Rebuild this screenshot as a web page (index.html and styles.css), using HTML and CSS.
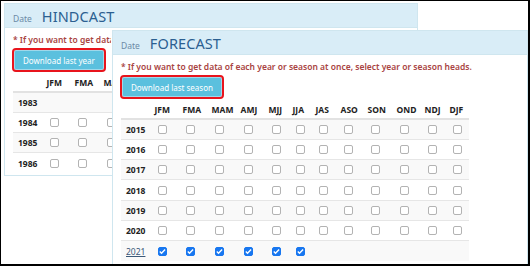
FILE: index.html
```html
<!DOCTYPE html>
<html>
<head>
	<meta http-equiv="Content-Type" content="text/html;charset=UTF-8">
	<title>Date</title>
	<link rel="stylesheet" href="styles.css">
</head>
<body>
	<div class="frame">
		<div class="panel hindcast">
			<div class="panel-heading">
				<span class="date-label">Date</span>
				<span class="panel-title">HINDCAST</span>
			</div>
			<div class="panel-body">
				<p class="notice">* If you want to get data of each year or season at once, select year or season heads.</p>
				<button class="btn-info">Download last year</button>
				<table class="season-table">
					<colgroup>
						<col class="c-year"><col class="c-jfm"><col class="c-fma"><col class="c-mam">
					</colgroup>
					<thead>
						<tr><th></th><th>JFM</th><th>FMA</th><th>MAM</th></tr>
					</thead>
					<tbody>
						<tr><td class="year">1983</td><td></td><td></td><td></td></tr>
						<tr><td class="year">1984</td><td><input type="checkbox"></td><td><input type="checkbox"></td><td><input type="checkbox"></td></tr>
						<tr><td class="year">1985</td><td><input type="checkbox"></td><td><input type="checkbox"></td><td><input type="checkbox"></td></tr>
						<tr><td class="year">1986</td><td><input type="checkbox"></td><td><input type="checkbox"></td><td><input type="checkbox"></td></tr>
					</tbody>
				</table>
			</div>
		</div>

		<div class="panel forecast">
			<div class="panel-heading">
				<span class="date-label">Date</span>
				<span class="panel-title">FORECAST</span>
			</div>
			<div class="panel-body">
				<p class="notice">* If you want to get data of each year or season at once, select year or season heads.</p>
				<button class="btn-info">Download last season</button>
				<table class="season-table full">
					<colgroup>
						<col class="c-year"><col class="c-jfm"><col class="c-fma"><col class="c-mam"><col class="c-amj"><col class="c-mjj"><col class="c-jja">
						<col class="c-jas"><col class="c-aso"><col class="c-son"><col class="c-ond"><col class="c-ndj"><col class="c-djf">
					</colgroup>
					<thead>
						<tr><th></th><th>JFM</th><th>FMA</th><th>MAM</th><th>AMJ</th><th>MJJ</th><th>JJA</th><th>JAS</th><th>ASO</th><th>SON</th><th>OND</th><th>NDJ</th><th>DJF</th></tr>
					</thead>
					<tbody>
						<tr><td class="year">2015</td><td><input type="checkbox"></td><td><input type="checkbox"></td><td><input type="checkbox"></td><td><input type="checkbox"></td><td><input type="checkbox"></td><td><input type="checkbox"></td><td><input type="checkbox"></td><td><input type="checkbox"></td><td><input type="checkbox"></td><td><input type="checkbox"></td><td><input type="checkbox"></td><td><input type="checkbox"></td></tr>
						<tr><td class="year">2016</td><td><input type="checkbox"></td><td><input type="checkbox"></td><td><input type="checkbox"></td><td><input type="checkbox"></td><td><input type="checkbox"></td><td><input type="checkbox"></td><td><input type="checkbox"></td><td><input type="checkbox"></td><td><input type="checkbox"></td><td><input type="checkbox"></td><td><input type="checkbox"></td><td><input type="checkbox"></td></tr>
						<tr><td class="year">2017</td><td><input type="checkbox"></td><td><input type="checkbox"></td><td><input type="checkbox"></td><td><input type="checkbox"></td><td><input type="checkbox"></td><td><input type="checkbox"></td><td><input type="checkbox"></td><td><input type="checkbox"></td><td><input type="checkbox"></td><td><input type="checkbox"></td><td><input type="checkbox"></td><td><input type="checkbox"></td></tr>
						<tr><td class="year">2018</td><td><input type="checkbox"></td><td><input type="checkbox"></td><td><input type="checkbox"></td><td><input type="checkbox"></td><td><input type="checkbox"></td><td><input type="checkbox"></td><td><input type="checkbox"></td><td><input type="checkbox"></td><td><input type="checkbox"></td><td><input type="checkbox"></td><td><input type="checkbox"></td><td><input type="checkbox"></td></tr>
						<tr><td class="year">2019</td><td><input type="checkbox"></td><td><input type="checkbox"></td><td><input type="checkbox"></td><td><input type="checkbox"></td><td><input type="checkbox"></td><td><input type="checkbox"></td><td><input type="checkbox"></td><td><input type="checkbox"></td><td><input type="checkbox"></td><td><input type="checkbox"></td><td><input type="checkbox"></td><td><input type="checkbox"></td></tr>
						<tr><td class="year">2020</td><td><input type="checkbox"></td><td><input type="checkbox"></td><td><input type="checkbox"></td><td><input type="checkbox"></td><td><input type="checkbox"></td><td><input type="checkbox"></td><td><input type="checkbox"></td><td><input type="checkbox"></td><td><input type="checkbox"></td><td><input type="checkbox"></td><td><input type="checkbox"></td><td><input type="checkbox"></td></tr>
						<tr><td class="year"><a href="#">2021</a></td><td><input type="checkbox" checked></td><td><input type="checkbox" checked></td><td><input type="checkbox" checked></td><td><input type="checkbox" checked></td><td><input type="checkbox" checked></td><td><input type="checkbox" checked></td><td></td><td></td><td></td><td></td><td></td><td></td></tr>
					</tbody>
				</table>
			</div>
		</div>
	</div>
</body>
</html>
```

FILE: styles.css
```css
*{
	margin: 0;
	padding: 0;
	box-sizing: border-box;
}
body{
	font-family: "Noto Sans", "Open Sans", sans-serif;
	background-color: #fff;
}
.frame{
	position: relative;
	width: 530px;
	height: 266px;
	border: 1px solid #000;
	border-right-width: 2px;
	border-bottom-width: 2px;
	overflow: hidden;
	background-color: #fff;
}
.panel{
	border: 1px solid #cfe6ef;
	background-color: #fff;
}
.panel.hindcast{
	width: 414px;
	margin: 2px 0 0 3px;
	padding-bottom: 2px;
}
/* forecast window lies on top of the hindcast one */
.panel.forecast{
	position: absolute;
	left: 111px;
	top: 29px;
	width: 416px;
	height: 260px;
}
.panel-heading{
	display: flex;
	align-items: baseline;
	gap: 10px;
	height: 24px;
	padding: 3px 8px 0;
	background-color: #d9edf7;
	border-bottom: 1px solid #cfe6ef;
}
.date-label{
	font-size: 8.5px;
	color: #6b8aa6;
}
.panel-title{
	font-size: 14.5px;
	line-height: 18px;
	color: #2b5f91;
	letter-spacing: 0.1px;
}
.panel-body{
	padding: 6px 8px 0;
}
.notice{
	font-size: 8.5px;
	line-height: 12px;
	font-weight: 600;
	color: #a94442;
	white-space: nowrap;
}
/* the rest of this line sits under the forecast window */
.hindcast .notice{
	width: 98px;
	overflow: hidden;
}
.btn-info{
	display: block;
	margin: 4px 0 0 1px;
	height: 20px;
	padding: 0 8px;
	font-family: inherit;
	font-size: 8px;
	color: #fff;
	background-color: #5bc0de;
	border: 1px solid #9fd8ea;
	border-radius: 2px;
	outline: 2px solid #e8141c;
	cursor: pointer;
}
.season-table{
	margin-top: 4px;
	border-collapse: collapse;
	table-layout: fixed;
	width: 114.5px;
	font-size: 8.5px;
}
.season-table.full{
	width: 348px;
}
.c-year{ width: 28.5px; }
.c-jfm{ width: 28px; }
.c-fma{ width: 29px; }
.c-mam{ width: 29px; }
.c-amj{ width: 28px; }
.c-mjj{ width: 24px; }
.c-jja{ width: 23px; }
.c-jas{ width: 25px; }
.c-aso{ width: 27px; }
.c-son{ width: 29px; }
.c-ond{ width: 28px; }
.c-ndj{ width: 25px; }
.c-djf{ width: 24.5px; }
.season-table th{
	height: 18px;
	padding: 0 0 0 5px;
	text-align: left;
	font-weight: 700;
	color: #222;
	white-space: nowrap;
	border-bottom: 2px solid #e2e2e2;
}
.season-table td{
	height: 20.33px;
	padding: 0 0 0 5px;
	border-top: 1px solid #e6e6e6;
	vertical-align: middle;
}
.season-table tbody tr:nth-child(odd){
	background-color: #f9f9f9;
}
.season-table td.year{
	font-weight: 700;
	color: #222;
}
.season-table td.year a{
	font-weight: 400;
	color: #3b5878;
}
.season-table input[type=checkbox]{
	appearance: none;
	-webkit-appearance: none;
	display: block;
	width: 9px;
	height: 9px;
	margin-left: 3px;
	border: 1px solid #b3b3b3;
	border-radius: 2px;
	background-color: #fff;
}
.season-table input[type=checkbox]:checked{
	border-color: #1877f0;
	background-color: #1877f0;
	background-image: url("data:image/svg+xml,%3Csvg xmlns='http://www.w3.org/2000/svg' viewBox='0 0 9 9'%3E%3Cpath d='M1.8 4.6l1.7 1.6 3.6-3.6' fill='none' stroke='%23fff' stroke-width='1.4'/%3E%3C/svg%3E");
	background-size: 9px 9px;
	background-position: center;
}
```
